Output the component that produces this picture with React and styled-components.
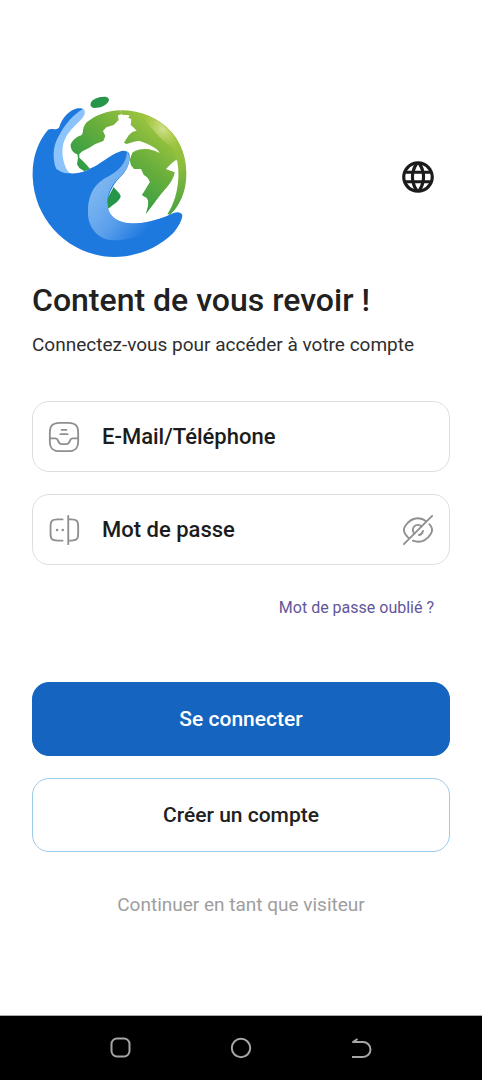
import React, { useState } from "react";
import styled, { createGlobalStyle } from "styled-components";
import { MdLanguage } from "react-icons/md";

const GlobalStyle = createGlobalStyle`
  *, *::before, *::after { box-sizing: border-box; }
  body {
    margin: 0;
    background: #fff;
    color: #212121;
    font-family: Roboto, "Liberation Sans", sans-serif;
  }
`;

const Screen = styled.div`
  min-height: 100vh;
  display: flex;
  flex-direction: column;
`;

const Main = styled.main`
  flex: 1;
  display: flex;
  flex-direction: column;
  padding: 95px 32px 32px;
`;

const Header = styled.header`
  display: flex;
  align-items: center;
  justify-content: space-between;
  padding-right: 13px;
`;

const Logo = styled.svg`
  width: 156px;
  height: 163px;
`;

const IconButton = styled.button`
  display: flex;
  flex: none;
  padding: 0;
  border: 0;
  background: none;
  color: ${(p) => p.$color};
  cursor: pointer;
`;

const Title = styled.h1`
  margin: 22px 0 0;
  font-size: 32px;
  line-height: 40px;
  font-weight: 500;
`;

const Subtitle = styled.p`
  margin: 13px 0 0;
  color: #2e2e2e;
  font-size: 19px;
  line-height: 24px;
`;

const Form = styled.form`
  display: flex;
  flex-direction: column;
  gap: 22px;
  margin-top: 44px;
`;

const Field = styled.div`
  display: flex;
  align-items: center;
  gap: 21px;
  height: 71px;
  padding: 0 14px;
  border: 1px solid #dedede;
  border-radius: 17px;
`;

const FieldLabel = styled.label`
  display: flex;
  color: #8f8f8f;
`;

const Input = styled.input`
  flex: 1;
  min-width: 0;
  height: 40px;
  padding: 0;
  border: 0;
  outline: 0;
  background: none;
  color: #1c1c1c;
  font: 500 22px/28px Roboto, "Liberation Sans", sans-serif;
  &::placeholder { color: #1c1c1c; opacity: 1; }
`;

const ForgotLink = styled.a`
  align-self: flex-end;
  margin: 11px 16px 42px 0;
  color: #63569a;
  font-size: 16px;
  line-height: 20px;
  text-decoration: none;
`;

const Button = styled.button`
  height: 74px;
  border: 1px solid ${(p) => (p.$primary ? "#1564c0" : "#9ccbe9")};
  border-radius: 17px;
  background: ${(p) => (p.$primary ? "#1564c0" : "#fff")};
  color: ${(p) => (p.$primary ? "#fff" : "#212121")};
  font: 500 21px/24px Roboto, "Liberation Sans", sans-serif;
  cursor: pointer;
`;

const GuestLink = styled.a`
  align-self: center;
  margin-top: 41px;
  color: #9e9e9e;
  font-size: 19px;
  line-height: 24px;
  text-decoration: none;
`;

const SystemBar = styled.nav`
  display: flex;
  height: 65px;
  padding: 0 12.5%;
  border-top: 1px solid #a9abab;
  background: #000;
`;

const SystemButton = styled.button`
  flex: 1;
  display: flex;
  align-items: center;
  justify-content: center;
  padding: 0;
  border: 0;
  background: none;
  color: #a6a6a6;
`;

const LineIcon = ({ size = 34, width = 1.3, children }) => (
  <svg
    width={size}
    height={size}
    viewBox="0 0 24 24"
    fill="none"
    stroke="currentColor"
    strokeWidth={width}
    strokeLinecap="round"
    strokeLinejoin="round"
    aria-hidden="true"
  >
    {children}
  </svg>
);

const InboxIcon = () => (
  <LineIcon>
    <path d="M9 22h6c5 0 7-2 7-7V9c0-5-2-7-7-7H9C4 2 2 4 2 9v6c0 5 2 7 7 7z" />
    <path d="M2 13h3.76c.76 0 1.45.43 1.79 1.11l.89 1.78C9 17 10 17 10.24 17h3.53c.76 0 1.45-.43 1.79-1.11l.89-1.78A2 2 0 0 1 18.24 13H22" />
    <path d="M10.34 7h3.33M9.5 10h5" />
  </LineIcon>
);

const PasswordIcon = () => (
  <LineIcon>
    <path d="M11 19.5H7.5c-4 0-5-1-5-5v-5c0-4 1-5 5-5H11" />
    <path d="M15 4.5h2c4 0 5 1 5 5v5c0 4-1 5-5 5h-2M15 2v20" />
    <path d="M11.1 12h.01M7.1 12h.01" strokeWidth="1.8" />
  </LineIcon>
);

const EyeSlashIcon = () => (
  <LineIcon>
    <path d="M14.53 9.47l-5.06 5.06a3.58 3.58 0 1 1 5.06-5.06z" />
    <path d="M17.82 5.77C16.07 4.45 14.07 3.73 12 3.73c-3.53 0-6.82 2.08-9.11 5.68-.9 1.41-.9 3.78 0 5.19.79 1.24 1.71 2.31 2.71 3.17" />
    <path d="M8.42 19.53c1.14.48 2.35.74 3.58.74 3.53 0 6.82-2.08 9.11-5.68.9-1.41.9-3.78 0-5.19-.33-.52-.69-1.01-1.06-1.47" />
    <path d="M15.51 12.7a3.57 3.57 0 0 1-2.82 2.82M9.47 14.53L2 22M22 2l-7.47 7.47" />
  </LineIcon>
);

const EarthLogo = () => (
  <Logo viewBox="36 30 468 489" role="img" aria-label="Logo">
    <defs>
      <linearGradient id="land" gradientUnits="userSpaceOnUse" x1="440" y1="110" x2="250" y2="350">
        <stop offset="0" stopColor="#a9c93f" />
        <stop offset="0.45" stopColor="#68ae3c" />
        <stop offset="1" stopColor="#1f9848" />
      </linearGradient>
      <linearGradient id="rim" gradientUnits="userSpaceOnUse" x1="420" y1="110" x2="470" y2="390">
        <stop offset="0" stopColor="#a9c842" />
        <stop offset="0.5" stopColor="#8dbd3c" />
        <stop offset="1" stopColor="#47a043" />
      </linearGradient>
      <radialGradient id="shine" gradientUnits="userSpaceOnUse" cx="428" cy="132" r="72">
        <stop offset="0" stopColor="#dde8a0" stopOpacity="0.8" />
        <stop offset="1" stopColor="#b4cf50" stopOpacity="0" />
      </radialGradient>
      <linearGradient id="palm" gradientUnits="userSpaceOnUse" x1="225" y1="330" x2="370" y2="450">
        <stop offset="0" stopColor="#79b4f0" />
        <stop offset="0.5" stopColor="#5b9fec" />
        <stop offset="1" stopColor="#1d79df" />
      </linearGradient>
    </defs>
    <path fill="#27964a" d="M212 55C215 43 232 36 252 35C266 35 270 42 264 52C255 64 237 70 221 69C213 67 210 62 212 55Z" />
    <path
      fill="url(#land)"
      d="M200 112C228 90 262 77 300 76L305 88L294 91L296 105L281 120L259 127L249 138L256 153L250 168L226 177L208 188L187 199L178 207L178 218L188 227L201 241L210 252L193 259L178 249L171 238L174 219L172 208C160 204 151 194 152 178C158 165 170 155 184 151C193 142 184 130 200 112Z"
    />
    <path
      fill="url(#land)"
      d="M300 76C362 75 417 98 458 145C493 188 506 248 494 300C486 342 470 374 449 389L441 385C458 350 472 290 469 224C460 230 447 241 438 253L464 262C460 286 440 308 422 328L378 386C385 364 389 350 380 338L366 330L376 318L390 291L389 283L371 269L363 252L342 252L333 241L329 225L337 203C350 194 365 190 388 193L406 198L419 204C413 190 387 178 359 168C346 168 333 173 320 177L312 173L326 151L338 140L350 137L339 126L332 120L334 103L325 98L329 91L306 89Z"
    />
    <path fill="url(#rim)" d="M392 96C459 127 499 188 499 268C499 318 480 364 448 389L441 385C466 349 484 287 470 225C462 187 440 145 392 96Z" />
    <path fill="#fff" d="M471 225L438 253L464 262L462 286L428 328L378 386C401 390 428 391 443 386C466 353 484 288 471 225Z" />
    <path fill="url(#land)" d="M464 262C460 286 440 308 422 328L378 386C385 364 389 350 380 338L366 330L390 291L371 255L438 253Z" />
    <path fill="url(#shine)" d="M360 84C427 103 470 151 487 205C450 188 409 156 360 84Z" />
    <path fill="#25954a" d="M281 306C290 318 302 326 302 335C298 347 282 358 264 371L260 345Z" />
    <path
      fill="#1e79de"
      d="M172 70C149 75 126 98 117 128C107 137 93 128 83 136C52 173 36 222 38 276C43 410 151 514 282 516C354 516 418 486 459 445C475 426 487 405 487 390C482 380 472 380 461 384C427 400 373 419 327 415C284 411 262 387 262 358C263 325 283 292 309 268C325 250 332 223 328 206C321 196 309 196 298 200C269 211 239 238 212 250C190 264 161 269 133 262C119 235 112 184 130 142C139 115 166 89 190 72C186 69 179 69 172 70Z"
    />
    <path
      fill="#8bc3fa"
      d="M192 73C199 84 191 98 177 110C154 132 133 153 128 185C125 216 133 246 148 264C135 267 121 260 109 252C97 224 98 183 115 155C130 126 151 97 180 77Z"
    />
    <path
      fill="url(#palm)"
      d="M321 199C336 220 326 254 302 274C278 295 263 321 262 352C262 391 290 413 327 415C359 418 390 411 430 398C428 424 362 466 276 466C235 462 205 429 204 386C202 339 217 304 251 282C279 267 319 247 321 199Z"
    />
  </Logo>
);

export default function App() {
  const [visible, setVisible] = useState(false);

  return (
    <Screen>
      <GlobalStyle />
      <Main>
        <Header>
          <EarthLogo />
          <IconButton type="button" $color="#1b1b1b" aria-label="Changer de langue">
            <MdLanguage size={38} />
          </IconButton>
        </Header>
        <Title>Content de vous revoir !</Title>
        <Subtitle>Connectez-vous pour accéder à votre compte</Subtitle>
        <Form onSubmit={(e) => e.preventDefault()}>
          <Field>
            <FieldLabel htmlFor="login" aria-label="E-Mail/Téléphone">
              <InboxIcon />
            </FieldLabel>
            <Input id="login" type="text" placeholder="E-Mail/Téléphone" autoComplete="username" />
          </Field>
          <Field>
            <FieldLabel htmlFor="password" aria-label="Mot de passe">
              <PasswordIcon />
            </FieldLabel>
            <Input
              id="password"
              type={visible ? "text" : "password"}
              placeholder="Mot de passe"
              autoComplete="current-password"
            />
            <IconButton
              type="button"
              $color="#8f8f8f"
              aria-label="Afficher le mot de passe"
              onClick={() => setVisible(!visible)}
            >
              <EyeSlashIcon />
            </IconButton>
          </Field>
          <ForgotLink href="#forgot">Mot de passe oublié ?</ForgotLink>
          <Button type="submit" $primary>Se connecter</Button>
          <Button type="button">Créer un compte</Button>
        </Form>
        <GuestLink href="#guest">Continuer en tant que visiteur</GuestLink>
      </Main>
      <SystemBar aria-label="Système">
        <SystemButton type="button" aria-label="Applications récentes">
          <LineIcon size={24} width={2}>
            <rect x="2.5" y="2.5" width="18" height="18" rx="5.5" />
          </LineIcon>
        </SystemButton>
        <SystemButton type="button" aria-label="Accueil">
          <LineIcon size={24} width={2}>
            <circle cx="12" cy="12" r="9.2" />
          </LineIcon>
        </SystemButton>
        <SystemButton type="button" aria-label="Retour">
          <LineIcon size={24} width={2}>
            <path strokeLinecap="butt" d="M2 21h11a7.5 7.5 0 0 0 0-15H3L7.5 3" />
          </LineIcon>
        </SystemButton>
      </SystemBar>
    </Screen>
  );
}
